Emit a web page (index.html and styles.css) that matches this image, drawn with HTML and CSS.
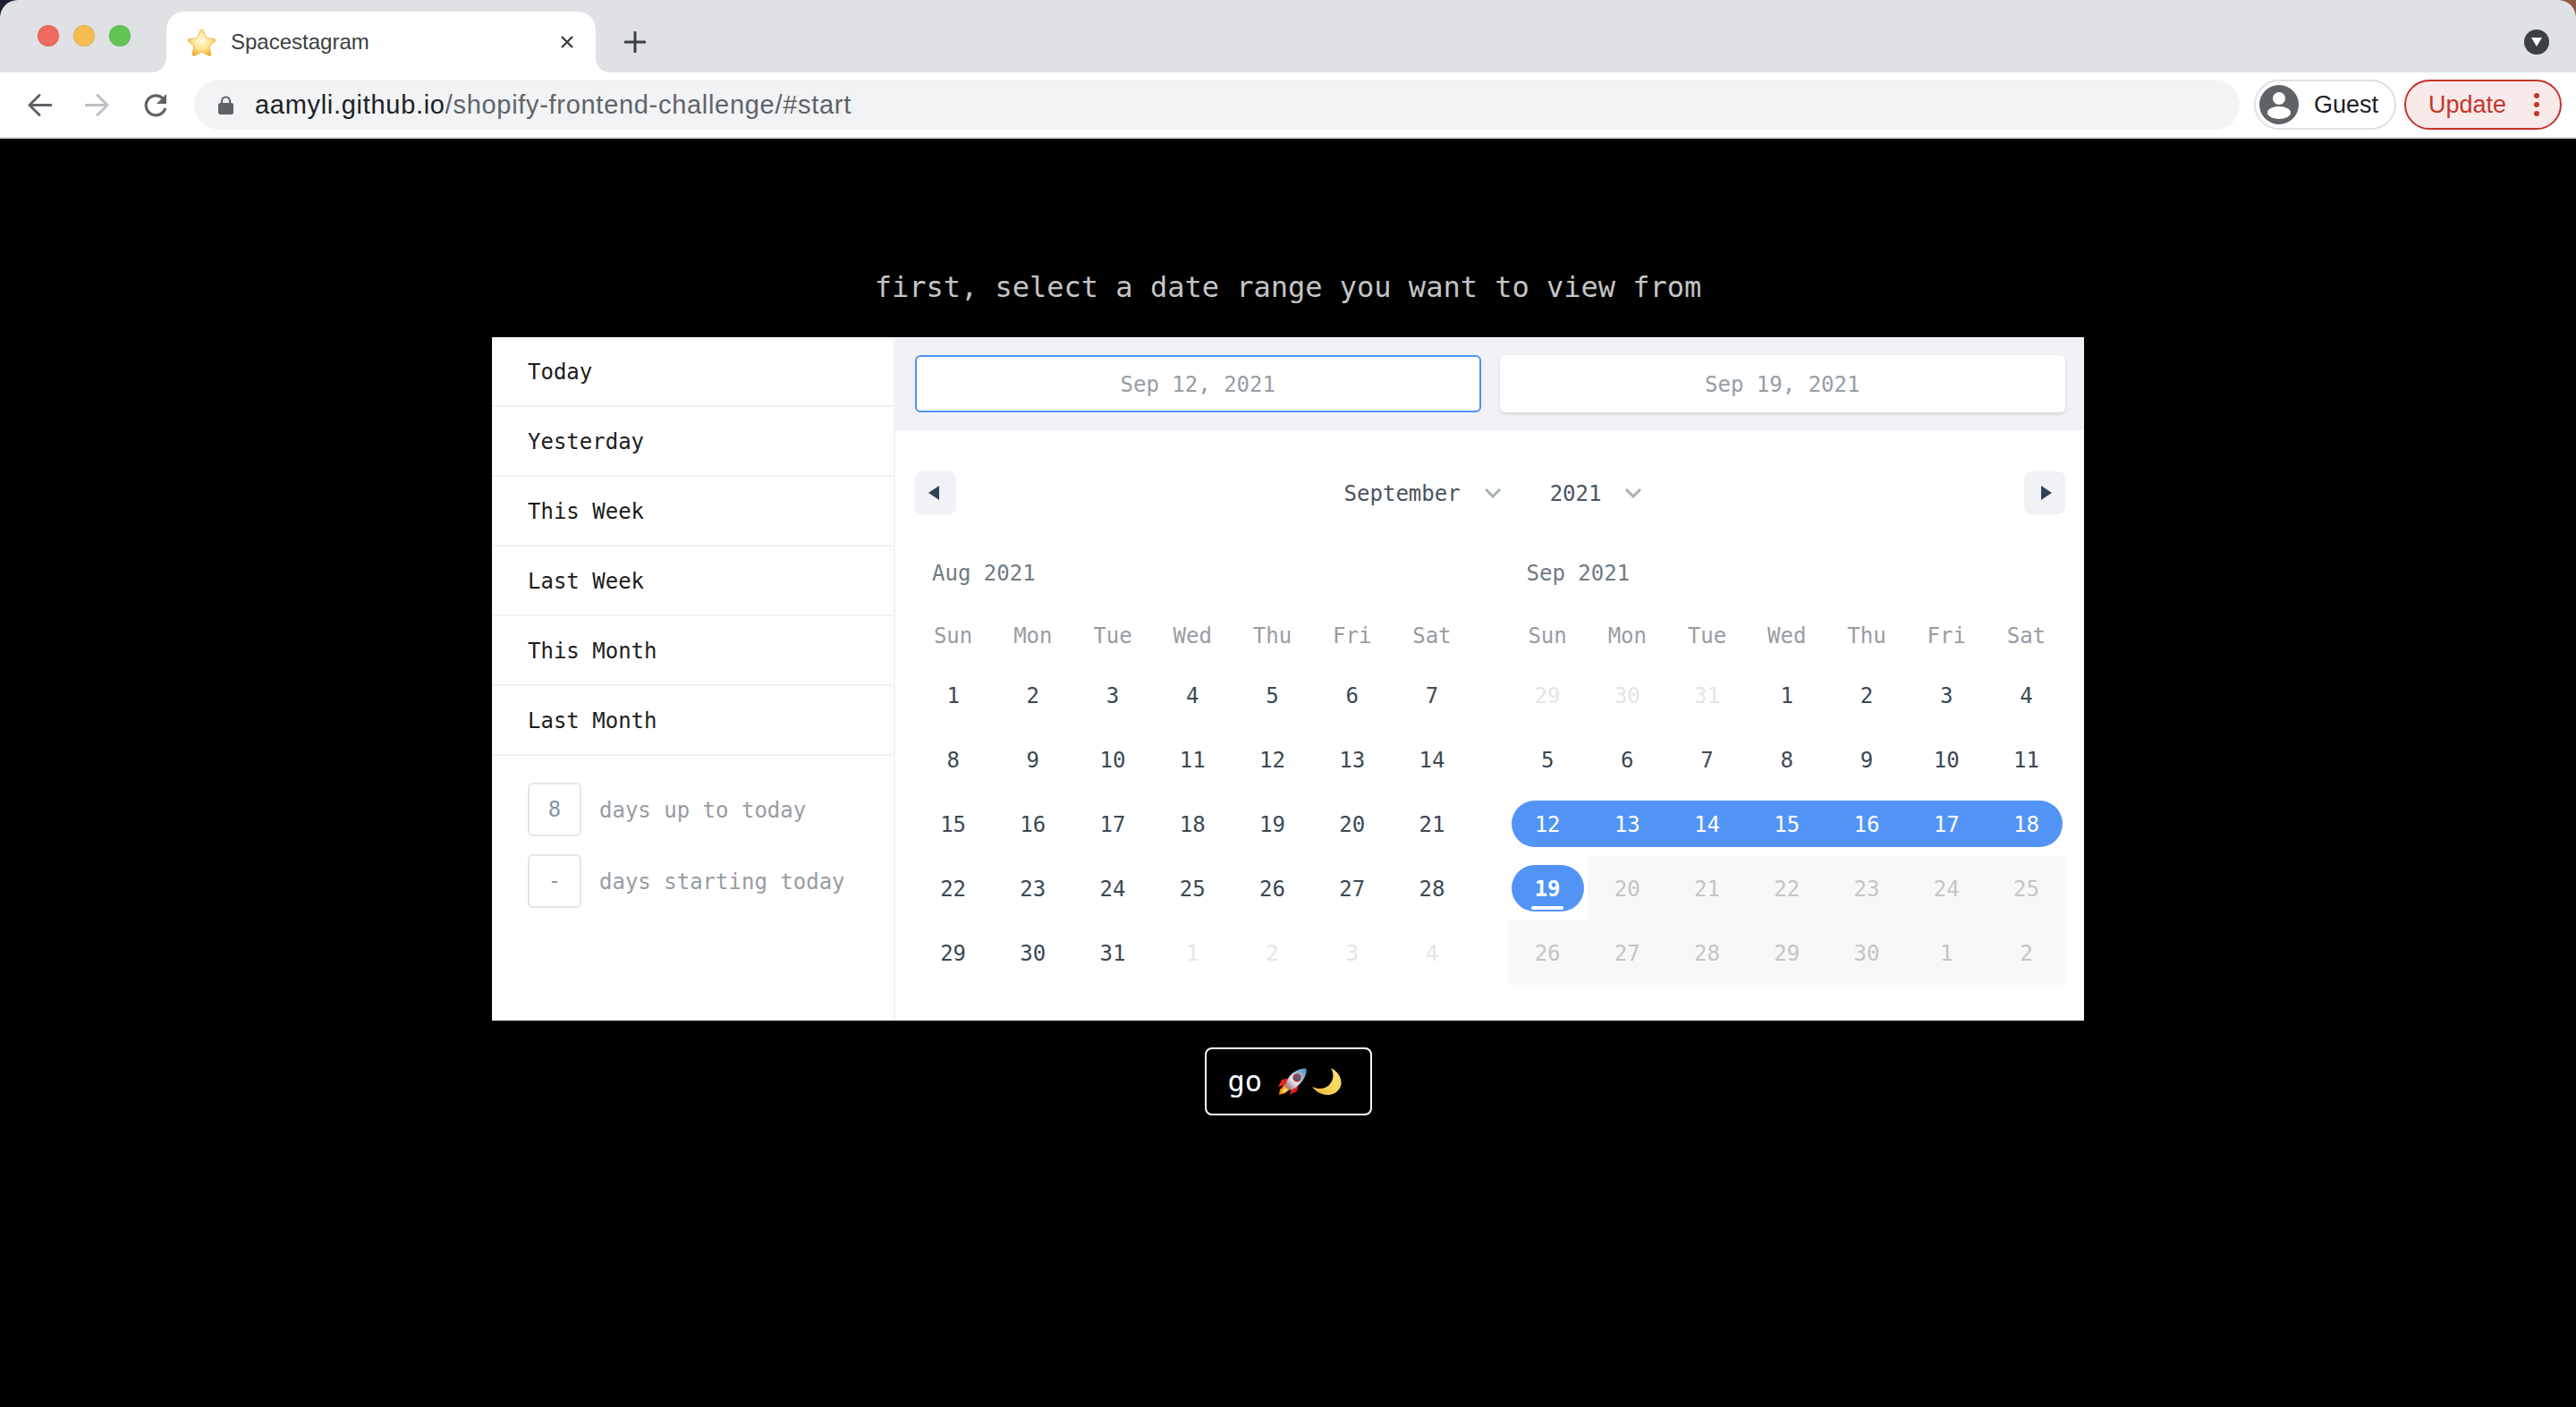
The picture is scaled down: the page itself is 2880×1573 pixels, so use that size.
FILE: index.html
```html
<!DOCTYPE html>
<html lang="en">
<head>
<meta charset="utf-8">
<title>Spacestagram</title>
<link rel="stylesheet" href="styles.css">
</head>
<body>
<header class="browser">
  <div class="tabstrip">
    <div class="lights"><i class="light red"></i><i class="light amber"></i><i class="light green"></i></div>
    <div class="tab">
      <svg class="favicon" viewBox="0 0 33 31"><defs><radialGradient id="star" cx="50%" cy="42%" r="60%"><stop offset="0" stop-color="#fffbe0"/><stop offset=".55" stop-color="#fde58f"/><stop offset="1" stop-color="#eeaa30"/></radialGradient></defs><path d="M16.500 1C17.500 1 18 1.800 18.400 2.700L21.700 10.500 30 11.400C32 11.600 32.500 13.200 31.100 14.400L25 19.800 26.800 28C27.200 30 25.800 31 24.100 30L16.500 26 8.900 30C7.200 31 5.800 30 6.200 28L8 19.800 1.900 14.400C.5 13.200 1 11.600 3 11.400L11.300 10.500 14.600 2.700C15 1.800 15.500 1 16.500 1z" fill="url(#star)" stroke="#e9a93a" stroke-width=".8"/></svg>
      <span class="tab-title">Spacestagram</span>
      <svg class="tab-close" viewBox="0 0 16 16"><path d="M2 2l12 12M14 2L2 14" stroke="#3c4043" stroke-width="2.400" fill="none"/></svg>
    </div>
    <svg class="new-tab" viewBox="0 0 24 24"><path d="M12 1v22M1 12h22" stroke="#3c4043" stroke-width="3" fill="none" stroke-linecap="round"/></svg>
    <div class="badge"><svg viewBox="0 0 14 12"><path d="M1 1h12L7 11z" fill="#fff"/></svg></div>
  </div>
  <div class="toolbar">
    <svg class="tool" viewBox="0 0 28 28"><path d="M27 14.500H3M14 3.500L3 14.500l11 11" stroke="#5f6368" stroke-width="3" fill="none" stroke-linecap="round" stroke-linejoin="round"/></svg>
    <svg class="tool" viewBox="0 0 28 28"><path d="M1 14.500h24M14 3.500l11 11-11 11" stroke="#bdc1c6" stroke-width="3" fill="none" stroke-linecap="round" stroke-linejoin="round"/></svg>
    <svg class="tool" viewBox="0 0 28 28"><path d="M22.500 7.500A11 11 0 1 0 24.800 18" stroke="#5f6368" stroke-width="3.200" fill="none"/><path d="M26 2v11H15z" fill="#5f6368"/></svg>
    <div class="omnibox">
      <svg class="lock" viewBox="0 0 17 21"><path d="M4 9V6a4.500 4.500 0 0 1 9 0v3" fill="none" stroke="#5f6368" stroke-width="2"/><rect x="0" y="8" width="17" height="13" rx="2.500" fill="#5f6368"/></svg>
      <span class="url"><b class="host">aamyli.github.io</b>/shopify-frontend-challenge/#start</span>
    </div>
    <div class="guest">
      <svg class="avatar" viewBox="0 0 44 44"><circle cx="22" cy="22" r="22" fill="#5f6368"/><circle cx="22" cy="15" r="7" fill="#fff"/><ellipse cx="22" cy="31" rx="13" ry="7" fill="#fff"/></svg>
      <span>Guest</span>
    </div>
    <div class="update">
      <span>Update</span>
      <svg class="dots" viewBox="0 0 6 26"><circle cx="3" cy="3" r="3"/><circle cx="3" cy="13" r="3"/><circle cx="3" cy="23" r="3"/></svg>
    </div>
  </div>
</header>
<main class="page">
  <h1 class="prompt">first, select a date range you want to view from</h1>
  <section class="picker">
    <aside class="ranges">
      <div class="range">Today</div>
      <div class="range">Yesterday</div>
      <div class="range">This Week</div>
      <div class="range">Last Week</div>
      <div class="range">This Month</div>
      <div class="range">Last Month</div>
      <div class="counts">
        <div class="count"><span class="count-box">8</span><span>days up to today</span></div>
        <div class="count"><span class="count-box">-</span><span>days starting today</span></div>
      </div>
    </aside>
    <div class="calendar">
      <div class="inputs">
        <div class="date-input active">Sep 12, 2021</div>
        <div class="date-input">Sep 19, 2021</div>
      </div>
      <div class="nav">
        <button class="nav-btn prev"><svg viewBox="0 0 12 16"><path d="M12 0v16L0 8z"/></svg></button>
        <div class="selects">
          <span class="select">September<svg class="chev" viewBox="0 0 20 12"><path d="M2 2l8 8 8-8" /></svg></span>
          <span class="select">2021<svg class="chev" viewBox="0 0 20 12"><path d="M2 2l8 8 8-8" /></svg></span>
        </div>
        <button class="nav-btn next"><svg viewBox="0 0 12 16"><path d="M0 0v16l12-8z"/></svg></button>
      </div>
      <div class="months">
        <div class="month">
          <div class="month-title">Aug 2021</div>
          <div class="grid">
            <div class="wd">Sun</div><div class="wd">Mon</div><div class="wd">Tue</div><div class="wd">Wed</div><div class="wd">Thu</div><div class="wd">Fri</div><div class="wd">Sat</div>
            <div class="day">1</div><div class="day">2</div><div class="day">3</div><div class="day">4</div><div class="day">5</div><div class="day">6</div><div class="day">7</div>
            <div class="day">8</div><div class="day">9</div><div class="day">10</div><div class="day">11</div><div class="day">12</div><div class="day">13</div><div class="day">14</div>
            <div class="day">15</div><div class="day">16</div><div class="day">17</div><div class="day">18</div><div class="day">19</div><div class="day">20</div><div class="day">21</div>
            <div class="day">22</div><div class="day">23</div><div class="day">24</div><div class="day">25</div><div class="day">26</div><div class="day">27</div><div class="day">28</div>
            <div class="day">29</div><div class="day">30</div><div class="day">31</div><div class="day off">1</div><div class="day off">2</div><div class="day off">3</div><div class="day off">4</div>
          </div>
        </div>
        <div class="month">
          <div class="month-title">Sep 2021</div>
          <div class="grid">
            <div class="wd">Sun</div><div class="wd">Mon</div><div class="wd">Tue</div><div class="wd">Wed</div><div class="wd">Thu</div><div class="wd">Fri</div><div class="wd">Sat</div>
            <div class="day off">29</div><div class="day off">30</div><div class="day off">31</div><div class="day">1</div><div class="day">2</div><div class="day">3</div><div class="day">4</div>
            <div class="day">5</div><div class="day">6</div><div class="day">7</div><div class="day">8</div><div class="day">9</div><div class="day">10</div><div class="day">11</div>
            <div class="day sel start"><span>12</span></div><div class="day sel"><span>13</span></div><div class="day sel"><span>14</span></div><div class="day sel"><span>15</span></div><div class="day sel"><span>16</span></div><div class="day sel"><span>17</span></div><div class="day sel end"><span>18</span></div>
            <div class="day sel start end today"><span>19</span></div><div class="day dis">20</div><div class="day dis">21</div><div class="day dis">22</div><div class="day dis">23</div><div class="day dis">24</div><div class="day dis">25</div>
            <div class="day dis">26</div><div class="day dis">27</div><div class="day dis">28</div><div class="day dis">29</div><div class="day dis">30</div><div class="day dis">1</div><div class="day dis">2</div>
          </div>
        </div>
      </div>
    </div>
  </section>
  <button class="go">go
    <svg class="emoji rocket" viewBox="0 0 32 30"><defs><linearGradient id="hull" x1="0" y1="1" x2="1" y2="0"><stop offset="0" stop-color="#8c4a55"/><stop offset=".4" stop-color="#e2e6ea"/><stop offset=".72" stop-color="#8fb2d0"/><stop offset="1" stop-color="#4b8fc8"/></linearGradient></defs><path d="M14 11L4 13 0 21l9-2zM23 17l-2 9-8 4 2-8z" fill="#e2231a"/><path d="M8 18L2 24 1 30l7-2 6-5z" fill="#f7941b"/><path d="M7 22l-3 6 5-2 2-2z" fill="#ffe36b"/><path d="M31.500.5C25 0 18 3 13 9 10 13 8.500 17 8 20L13 25C17 24 21 21 25 17 30 11 32 6 31.500.5z" fill="url(#hull)"/><circle cx="21" cy="11" r="3.800" fill="#4f6279" stroke="#c3272b" stroke-width="1.500"/></svg>
    <svg class="emoji moon" viewBox="0 0 33 30"><defs><linearGradient id="moon" x1="1" y1="0" x2="0" y2="1"><stop offset="0" stop-color="#fbe27a"/><stop offset=".6" stop-color="#f8d256"/><stop offset="1" stop-color="#e8a92e"/></linearGradient></defs><path d="M21 0C29 4 33 11 32.500 18 31 26 24 30.500 16 30 9 29.500 4 26 0 21 7 24 14 24 19 19 24 14 25 7 21 0z" fill="url(#moon)"/></svg>
  </button>
</main>
</body>
</html>
```
FILE: styles.css
```css
* { box-sizing: border-box; }
html, body { margin: 0; height: 100%; }
body { background: #000; font-family: "DejaVu Sans Mono", monospace; }

.browser { background: linear-gradient(90deg, #1b2030 50%, #8a5a44 50%); font-family: "Liberation Sans", Arial, sans-serif; }
.tabstrip { height: 81px; background: #dfe1e5; border-radius: 20px 20px 0 0; display: flex; align-items: center; padding: 0 30px 0 42px; }
.lights { display: flex; gap: 16px; margin: 0 40px 2px 0; }
.light { width: 24px; height: 24px; border-radius: 50%; display: block; border: 1px solid rgba(0,0,0,.08); }
.red { background: #ee6a5e; }
.amber { background: #f5bd4f; }
.green { background: #61c454; }
.tab { position: relative; align-self: flex-end; width: 480px; height: 68px; background: #fff; border-radius: 20px 20px 0 0; display: flex; align-items: center; padding: 0 24px 0 23px; }
.tab::before, .tab::after { content: ""; position: absolute; bottom: 0; width: 16px; height: 16px; }
.tab::before { left: -16px; background: radial-gradient(circle at 0 0, transparent 15.500px, #fff 16px); }
.tab::after { right: -16px; background: radial-gradient(circle at 100% 0, transparent 15.500px, #fff 16px); }
.favicon { width: 33px; height: 31px; margin-right: 16px; }
.tab-title { font-size: 24px; color: #3c4043; flex: 1; }
.tab-close { width: 16px; height: 16px; }
.new-tab { width: 24px; height: 24px; margin: 13px 0 0 32px; }
.badge { margin: 13px 0 0 auto; width: 28px; height: 28px; border-radius: 50%; background: #3c4043; display: flex; align-items: center; justify-content: center; }
.badge svg { width: 14px; height: 12px; }

.toolbar { height: 74px; background: #fff; border-bottom: 2px solid #dadce0; display: flex; align-items: center; padding: 0 16px 0 30px; }
.tool { width: 28px; height: 28px; margin-right: 37px; flex: none; }
.tool:nth-child(3) { margin-right: 29px; }
.omnibox { flex: 1; height: 56px; border-radius: 28px; background: #f1f3f4; display: flex; align-items: center; padding-left: 27px; margin-right: 16px; }
.lock { width: 17px; height: 21px; margin-right: 24px; }
.url { font-size: 29px; letter-spacing: .7px; color: #5f6368; }
.host { font-weight: 400; color: #202124; }
.guest { width: 159px; height: 56px; border: 2px solid #e0e0e0; border-radius: 28px; display: flex; align-items: center; padding-left: 4px; gap: 17px; font-size: 27px; color: #202124; margin-right: 9px; }
.avatar { width: 44px; height: 44px; }
.update { width: 176px; height: 56px; border: 2px solid #c5352a; border-radius: 28px; background: #f9eaea; display: flex; align-items: center; padding-left: 25px; font-size: 27px; color: #c5352a; }
.dots { width: 6px; height: 26px; margin-left: auto; margin-right: 23px; fill: #c5352a; }

.page { display: flex; flex-direction: column; align-items: center; padding-top: 144px; }
.prompt { margin: 0 0 34px; font-size: 32px; line-height: 44px; font-weight: 400; color: #c4c4c4; white-space: nowrap; }
.picker { width: 1780px; height: 764px; background: #fff; display: flex; }

.ranges { width: 451px; border-right: 2px solid #f0f2f5; flex: none; }
.range { height: 78px; border-bottom: 2px solid #f0f2f5; padding: 2px 0 0 40px; display: flex; align-items: center; font-size: 24px; color: #1c1c1c; }
.counts { padding: 30px 0 0 40px; display: flex; flex-direction: column; gap: 20px; font-size: 24px; color: #969da3; }
.count { display: flex; align-items: center; gap: 20px; }
.count span:last-child { padding-top: 1px; }
.count-box { width: 60px; height: 60px; border: 2px solid #e1e6ea; border-radius: 6px; display: flex; align-items: center; justify-content: center; color: #8b949b; }

.calendar { flex: 1; min-width: 0; display: flex; flex-direction: column; }
.inputs { height: 104px; background: #f0f2f5; display: flex; gap: 21px; padding: 20px 21px 20px 22px; }
.date-input { flex: 1 1 0; background: #fff; border: 2px solid transparent; border-radius: 6px; padding-top: 2px; display: flex; align-items: center; justify-content: center; font-size: 24px; color: #969da3; box-shadow: 0 2px 4px rgba(0,0,0,.12); }
.date-input.active { box-shadow: none; border-color: #4f92f6; }
.nav { display: flex; justify-content: space-between; align-items: center; margin: 46px 21px 0 22px; height: 48px; }
.nav-btn { width: 46px; height: 48px; border: 0; padding: 0; border-radius: 8px; background: #f0f2f5; display: flex; align-items: center; justify-content: center; }
.nav-btn svg { width: 12px; height: 16px; fill: #2f4259; }
.prev svg { margin-right: 4px; }
.next svg { margin-left: 3px; }
.selects { display: flex; gap: 54px; padding-left: 7px; padding-top: 1px; font-size: 24px; color: #4a5560; }
.select { display: flex; align-items: center; gap: 26px; }
.chev { width: 20px; height: 12px; fill: none; stroke: #a8b0b5; stroke-width: 3; margin-top: -2px; }
.months { display: flex; gap: 40px; padding: 44px 20px 0 20px; }
.month { flex: 1; min-width: 0; }
.month-title { height: 44px; line-height: 44px; padding-left: 21px; font-size: 24px; color: #6f7a83; }
.grid { display: grid; grid-template-columns: repeat(7, 1fr); grid-template-rows: 60px repeat(5, 72px); margin-top: 18px; }
.wd { display: flex; align-items: center; justify-content: center; font-size: 24px; color: #969da3; }
.day { display: flex; align-items: center; justify-content: center; padding-top: 1px; font-size: 24px; color: #3d4852; }
.day.off { color: #e2e5e8; }
.day.dis { background: #f8f8f8; color: #c0c6ca; }
.day.sel { align-items: stretch; padding: 10px 0; }
.day.sel span { flex: 1; position: relative; background: #5294f6; color: #fff; padding-top: 1px; display: flex; align-items: center; justify-content: center; }
.day.start span { margin-left: 4px; padding-right: 4px; border-radius: 26px 0 0 26px; }
.day.end span { margin-right: 4px; padding-left: 4px; border-radius: 0 26px 26px 0; }
.day.start.end span { padding-left: 0; padding-right: 0; border-radius: 26px; font-weight: 700; }
.today span::after { content: ""; position: absolute; left: 22px; right: 23px; bottom: 2px; height: 4px; border-radius: 2px; background: #fff; }

.go { margin-top: 30px; width: 187px; height: 76px; background: #000; border: 2px solid #fff; border-radius: 8px; color: #fff; font: 32px "DejaVu Sans Mono", monospace; display: flex; align-items: center; padding: 0 0 0 24px; }
.emoji { flex: none; }
.rocket { width: 32px; height: 30px; margin-left: 18px; }
.moon { width: 33px; height: 30px; margin-left: 6px; }
```
